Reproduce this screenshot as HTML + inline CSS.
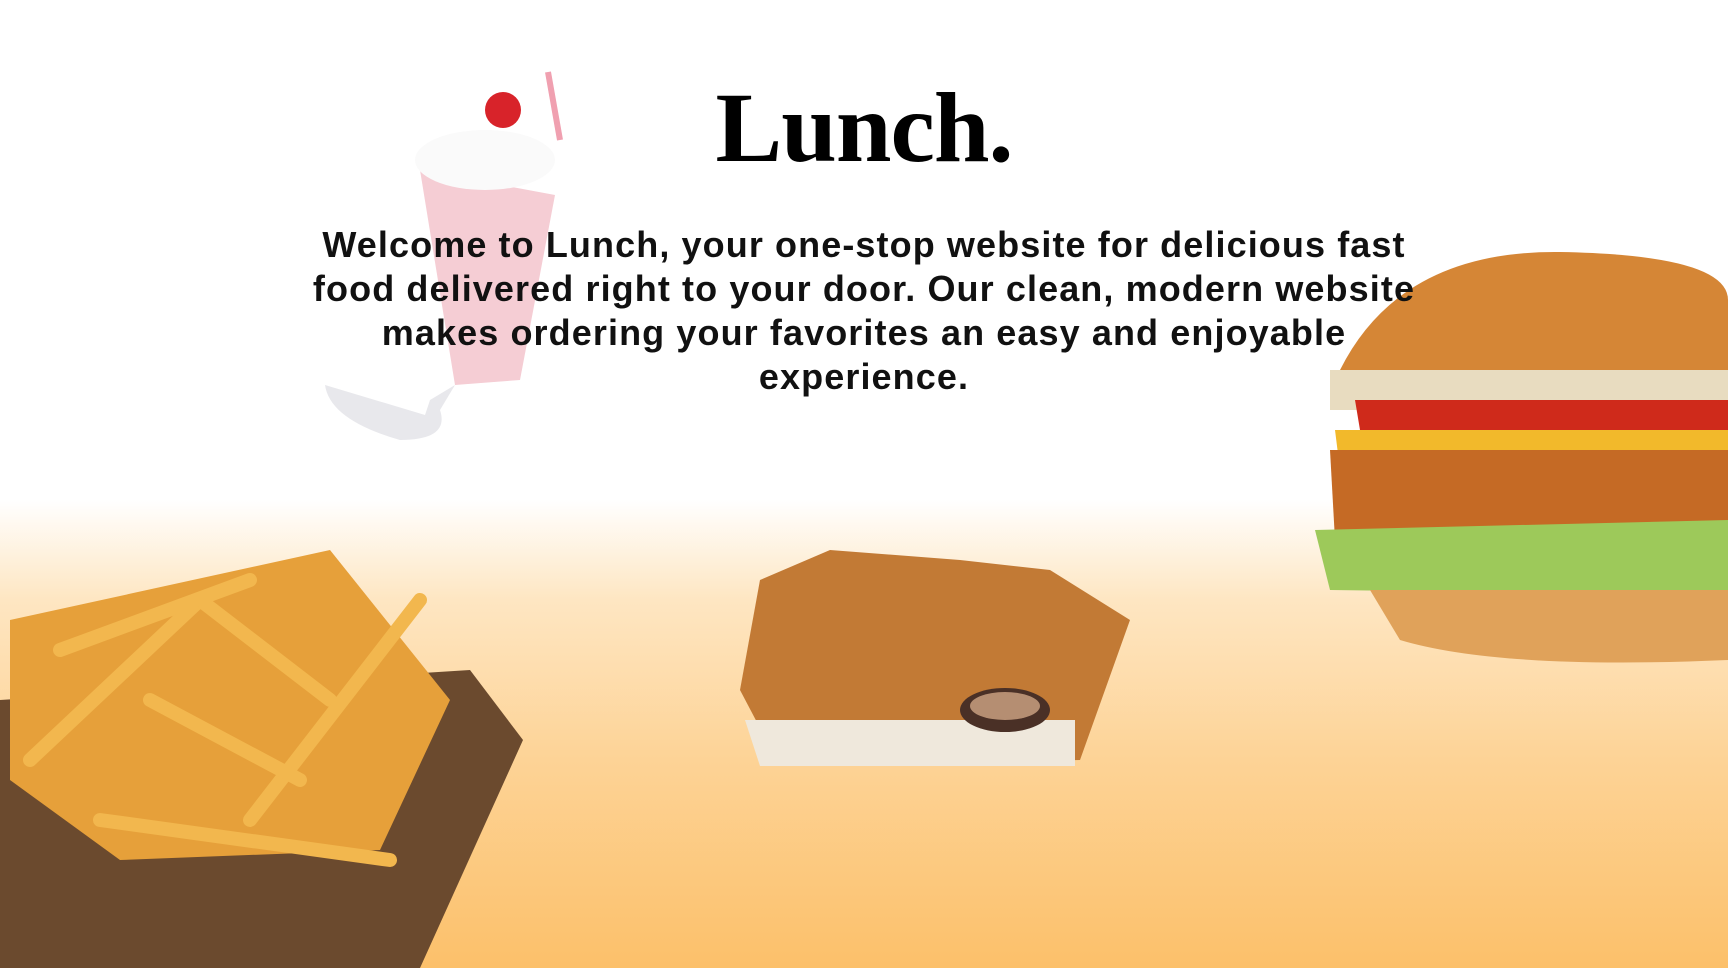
<!DOCTYPE html>
<html><head><meta charset="utf-8"><style>
html,body{margin:0;padding:0}
body{width:1728px;height:968px;overflow:hidden;position:relative;
background:linear-gradient(to bottom,#fff 0px,#fff 500px,#fee6c2 600px,#fdd396 760px,#fcc06a 968px);
font-family:"Liberation Sans",sans-serif}
h1{position:absolute;top:70px;left:0;width:1728px;text-align:center;margin:0;
font-family:"Liberation Serif",serif;font-weight:bold;font-size:100px;color:#000;letter-spacing:-1px}
p{position:absolute;top:223px;left:200px;width:1328px;margin:0;text-align:center;
font-size:36px;line-height:44px;font-weight:bold;color:#111;letter-spacing:1.1px;white-space:nowrap}
svg{position:absolute}
</style></head><body>
<svg style="left:0;top:0" width="1728" height="968">
<g>
<line x1="548" y1="72" x2="560" y2="140" stroke="#f0a0b0" stroke-width="6"/>
<path d="M420 170 L555 195 L520 380 L455 385 Z" fill="#f5cdd4"/>
<ellipse cx="485" cy="160" rx="70" ry="30" fill="#fafafa"/>
<circle cx="503" cy="110" r="18" fill="#d8232a"/>
<path d="M455 385 L430 400 L425 415 L325 385 Q330 420 400 440 Q450 440 440 410 Z" fill="#e8e8ec"/>
</g>
<path d="M0 700 L470 670 L523 740 L420 968 L0 968 Z" fill="#6b4a2e"/>
<path d="M10 620 L330 550 L450 700 L380 850 L120 860 L10 780 Z" fill="#e6a03a"/>
<g stroke="#f2b74e" stroke-width="14" stroke-linecap="round">
<line x1="30" y1="760" x2="200" y2="600"/><line x1="100" y1="820" x2="390" y2="860"/>
<line x1="200" y1="600" x2="330" y2="700"/><line x1="60" y1="650" x2="250" y2="580"/>
<line x1="250" y1="820" x2="420" y2="600"/><line x1="150" y1="700" x2="300" y2="780"/>
</g>
<path d="M740 690 L760 580 L830 550 L960 560 L1050 570 L1130 620 L1080 760 L780 766 Z" fill="#c27a35"/>
<path d="M745 720 L1075 720 L1075 766 L760 766 Z" fill="#efe8dc"/>
<ellipse cx="1005" cy="710" rx="45" ry="22" fill="#4a3026"/>
<ellipse cx="1005" cy="706" rx="35" ry="14" fill="#b58e72"/>
<path d="M1340 370 Q1400 250 1560 252 Q1728 255 1728 300 L1728 400 L1340 400 Z" fill="#d58636"/>
<rect x="1330" y="370" width="398" height="40" fill="#e8dcc0"/>
<path d="M1355 400 L1728 400 L1728 435 L1360 430 Z" fill="#cf2a1b"/>
<path d="M1335 430 L1728 430 L1728 480 L1340 470 Z" fill="#f2b92b"/>
<path d="M1330 450 L1728 450 L1728 550 L1335 540 Z" fill="#c56a25"/>
<path d="M1315 530 L1728 520 L1728 595 L1330 590 Z" fill="#9dc95a"/>
<path d="M1370 590 L1728 590 L1728 660 Q1500 670 1400 640 Z" fill="#e0a25a"/>
</svg>
<h1>Lunch.</h1>
<p>Welcome to Lunch, your one-stop website for delicious fast<br>food delivered right to your door. Our clean, modern website<br>makes ordering your favorites an easy and enjoyable<br>experience.</p>
</body></html>
